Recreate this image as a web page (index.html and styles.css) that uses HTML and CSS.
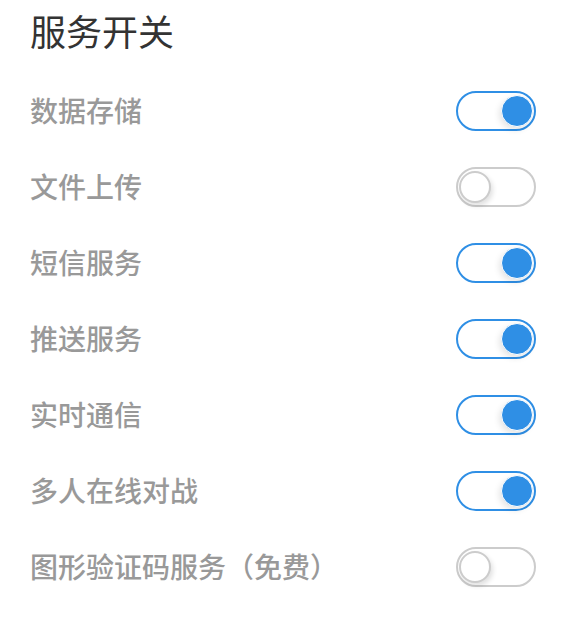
FILE: index.html
```html
<!DOCTYPE html>
<html lang="zh-CN">
<head>
    <meta charset="UTF-8">
    <meta name="viewport" content="width=device-width, initial-scale=1.0">
    <title>服务开关</title>
    <link rel="stylesheet" href="styles.css">
</head>
<body>
    <div class="container">
        <h1>服务开关</h1>
        <ul class="switch-list">
            <li class="switch-row">
                <span class="label">数据存储</span>
                <span class="switch on"><span class="knob"></span></span>
            </li>
            <li class="switch-row">
                <span class="label">文件上传</span>
                <span class="switch"><span class="knob"></span></span>
            </li>
            <li class="switch-row">
                <span class="label">短信服务</span>
                <span class="switch on"><span class="knob"></span></span>
            </li>
            <li class="switch-row">
                <span class="label">推送服务</span>
                <span class="switch on"><span class="knob"></span></span>
            </li>
            <li class="switch-row">
                <span class="label">实时通信</span>
                <span class="switch on"><span class="knob"></span></span>
            </li>
            <li class="switch-row">
                <span class="label">多人在线对战</span>
                <span class="switch on"><span class="knob"></span></span>
            </li>
            <li class="switch-row">
                <span class="label">图形验证码服务（免费）</span>
                <span class="switch"><span class="knob"></span></span>
            </li>
        </ul>
    </div>
</body>
</html>
```

FILE: styles.css
```css
/* General Styles */
body {
    margin: 0;
    padding: 0;
    background: #fff;
    font-family: "Noto Sans CJK SC", "Noto Sans", sans-serif;
}

.container {
    padding: 4px 36px 0 30px;
}

h1 {
    margin: 0 0 17px;
    font-size: 36px;
    line-height: 52px;
    font-weight: normal;
    color: #333;
}

.switch-list {
    list-style: none;
    margin: 0;
    padding: 0;
}

.switch-row {
    display: flex;
    align-items: center;
    justify-content: space-between;
    height: 76px;
}

.label {
    padding-bottom: 3px;
    font-size: 28px;
    line-height: 40px;
    font-weight: 500;
    color: #999;
}

/* Toggle */
.switch {
    position: relative;
    box-sizing: border-box;
    width: 80px;
    height: 40px;
    border: 2px solid #ccc;
    border-radius: 20px;
    background: #fff;
}

.switch .knob {
    position: absolute;
    top: 2px;
    left: 1px;
    box-sizing: border-box;
    width: 32px;
    height: 32px;
    border: 2px solid #ccc;
    border-radius: 50%;
    background: #fff;
    box-shadow: 2px 3px 5px rgba(0, 0, 0, 0.12);
}

.switch.on {
    border-color: #2f8fe5;
}

.switch.on .knob {
    left: 43px;
    border: 1px solid #fff;
    background: #2f8fe5;
    box-shadow: -2px 3px 6px rgba(0, 0, 0, 0.1);
}
```
